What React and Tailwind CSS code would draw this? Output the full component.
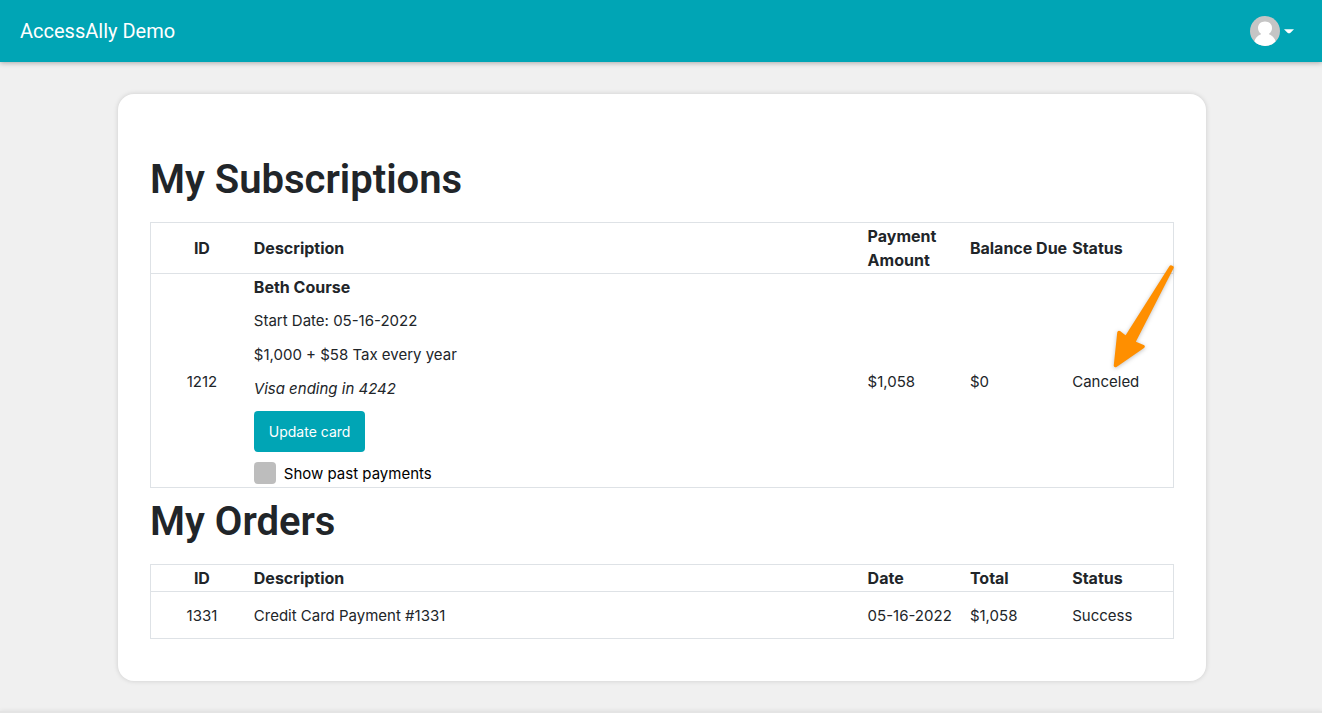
import React from "react";

const cell = "px-px pt-[2px] pb-0 text-left";
const headCell = "p-px text-left text-base leading-6";
const headIdCell = "p-px text-center text-base leading-6";
const idCell = "px-px pt-[2px] pb-0 text-center";
const title = "mb-[18px] font-['Roboto',sans-serif] text-[40px] leading-[48px] font-semibold";

function ColGroup() {
  return (
    <colgroup>
      <col className="w-[10%]" />
      <col className="w-[60%]" />
      <col className="w-[10%]" />
      <col className="w-[10%]" />
      <col className="w-[10%]" />
    </colgroup>
  );
}

function Header() {
  return (
    <header className="relative flex h-[62px] items-center justify-between bg-[#00a5b5] pr-7 pl-5 shadow-[0_1px_5px_rgba(0,0,0,0.3)]">
      <a href="#home" className="font-['Roboto',sans-serif] text-xl leading-6 text-white">
        AccessAlly Demo
      </a>
      <button type="button" aria-label="Account menu" className="flex items-center gap-1">
        <svg viewBox="0 0 30 30" className="size-[30px]" aria-hidden="true">
          <defs>
            <clipPath id="avatar-circle">
              <circle cx="15" cy="15" r="15" />
            </clipPath>
          </defs>
          <g clipPath="url(#avatar-circle)">
            <rect width="30" height="30" fill="#c5c5c5" />
            <path
              fill="#fff"
              d="M15 5.500c4.200 0 7 2.800 7 6.500 0 2.500-1.200 4.500-3 5.700v.6c3.600 1.300 6 4 6.700 7.500L22 31H8l-3.700-5.200c.7-3.500 3.100-6.200 6.700-7.500v-.6C9.200 16.500 8 14.500 8 12c0-3.700 2.800-6.500 7-6.500z"
            />
          </g>
        </svg>
        <svg viewBox="0 0 10 5" className="h-[5px] w-[10px]" aria-hidden="true">
          <path d="M0 0.300h10L6.500 3.800Q5 4.800 3.500 3.800z" fill="#fff" />
        </svg>
      </button>
    </header>
  );
}

function Arrow() {
  return (
    <svg
      viewBox="0 0 66 108"
      className="pointer-events-none absolute -right-1 bottom-6 h-[108px] w-[66px] overflow-visible drop-shadow-[0_1px_2px_rgba(0,0,0,0.25)]"
      aria-hidden="true"
    >
      <path
        d="M61 5 16 76 9 70.500 5.500 103.500 33 84.500 23.500 80.500 62 5.500z"
        fill="#ff8f00"
        stroke="#ff8f00"
        strokeWidth="3.500"
        strokeLinejoin="round"
      />
    </svg>
  );
}

function Subscriptions() {
  return (
    <section>
      <h1 className={title}>My Subscriptions</h1>
      <table className="w-full table-fixed border-collapse border border-[#dee2e6]">
        <ColGroup />
        <thead>
          <tr className="border-b border-[#dee2e6]">
            <th className={headIdCell}>ID</th>
            <th className={headCell}>Description</th>
            <th className={headCell}>Payment Amount</th>
            <th className={`${headCell} whitespace-nowrap`}>Balance Due</th>
            <th className={headCell}>Status</th>
          </tr>
        </thead>
        <tbody>
          <tr>
            <td className={idCell}>1212</td>
            <td className="p-px">
              <div className="flex flex-col items-start gap-[10px]">
                <strong className="text-base leading-6">Beth Course</strong>
                <p>Start Date: 05-16-2022</p>
                <p>$1,000 + $58 Tax every year</p>
                <em>Visa ending in 4242</em>
                <button
                  type="button"
                  className="h-[41px] rounded-[4px] bg-[#00a5b5] px-[15px] text-sm text-white"
                >
                  Update card
                </button>
                <label className="flex items-start gap-2 text-black">
                  <input
                    type="checkbox"
                    className="size-[22px] appearance-none rounded-[4px] bg-[#bdbdbd] checked:bg-[#00a5b5]"
                  />
                  Show past payments
                </label>
              </div>
            </td>
            <td className={cell}>$1,058</td>
            <td className={cell}>$0</td>
            <td className={cell}>
              <div className="relative">
                Canceled
                <Arrow />
              </div>
            </td>
          </tr>
        </tbody>
      </table>
    </section>
  );
}

function Orders() {
  return (
    <section className="mt-[10px]">
      <h1 className={title}>My Orders</h1>
      <table className="w-full table-fixed border-collapse border border-[#dee2e6]">
        <ColGroup />
        <thead>
          <tr className="border-b border-[#dee2e6]">
            <th className={headIdCell}>ID</th>
            <th className={headCell}>Description</th>
            <th className={headCell}>Date</th>
            <th className={headCell}>Total</th>
            <th className={headCell}>Status</th>
          </tr>
        </thead>
        <tbody>
          <tr className="h-[47px]">
            <td className={idCell}>1331</td>
            <td className={cell}>Credit Card Payment #1331</td>
            <td className={`${cell} whitespace-nowrap`}>05-16-2022</td>
            <td className={cell}>$1,058</td>
            <td className={cell}>Success</td>
          </tr>
        </tbody>
      </table>
    </section>
  );
}

export default function App() {
  return (
    <div className="flex min-h-screen flex-col bg-[#f0f0f0] font-['Inter',sans-serif] text-[15px] leading-6 text-[#212529]">
      <Header />
      <main className="flex grow flex-col pt-8 pr-[116px] pb-[30px] pl-[118px]">
        <div className="mx-auto w-full max-w-[1088px] rounded-2xl bg-white px-8 pt-[62px] pb-[42px] shadow-[0_0_5px_rgba(0,0,0,0.15)]">
          <Subscriptions />
          <Orders />
        </div>
      </main>
      <footer className="h-[2px] bg-[#e4e4e4] shadow-[0_0_4px_rgba(0,0,0,0.12)]" />
    </div>
  );
}
